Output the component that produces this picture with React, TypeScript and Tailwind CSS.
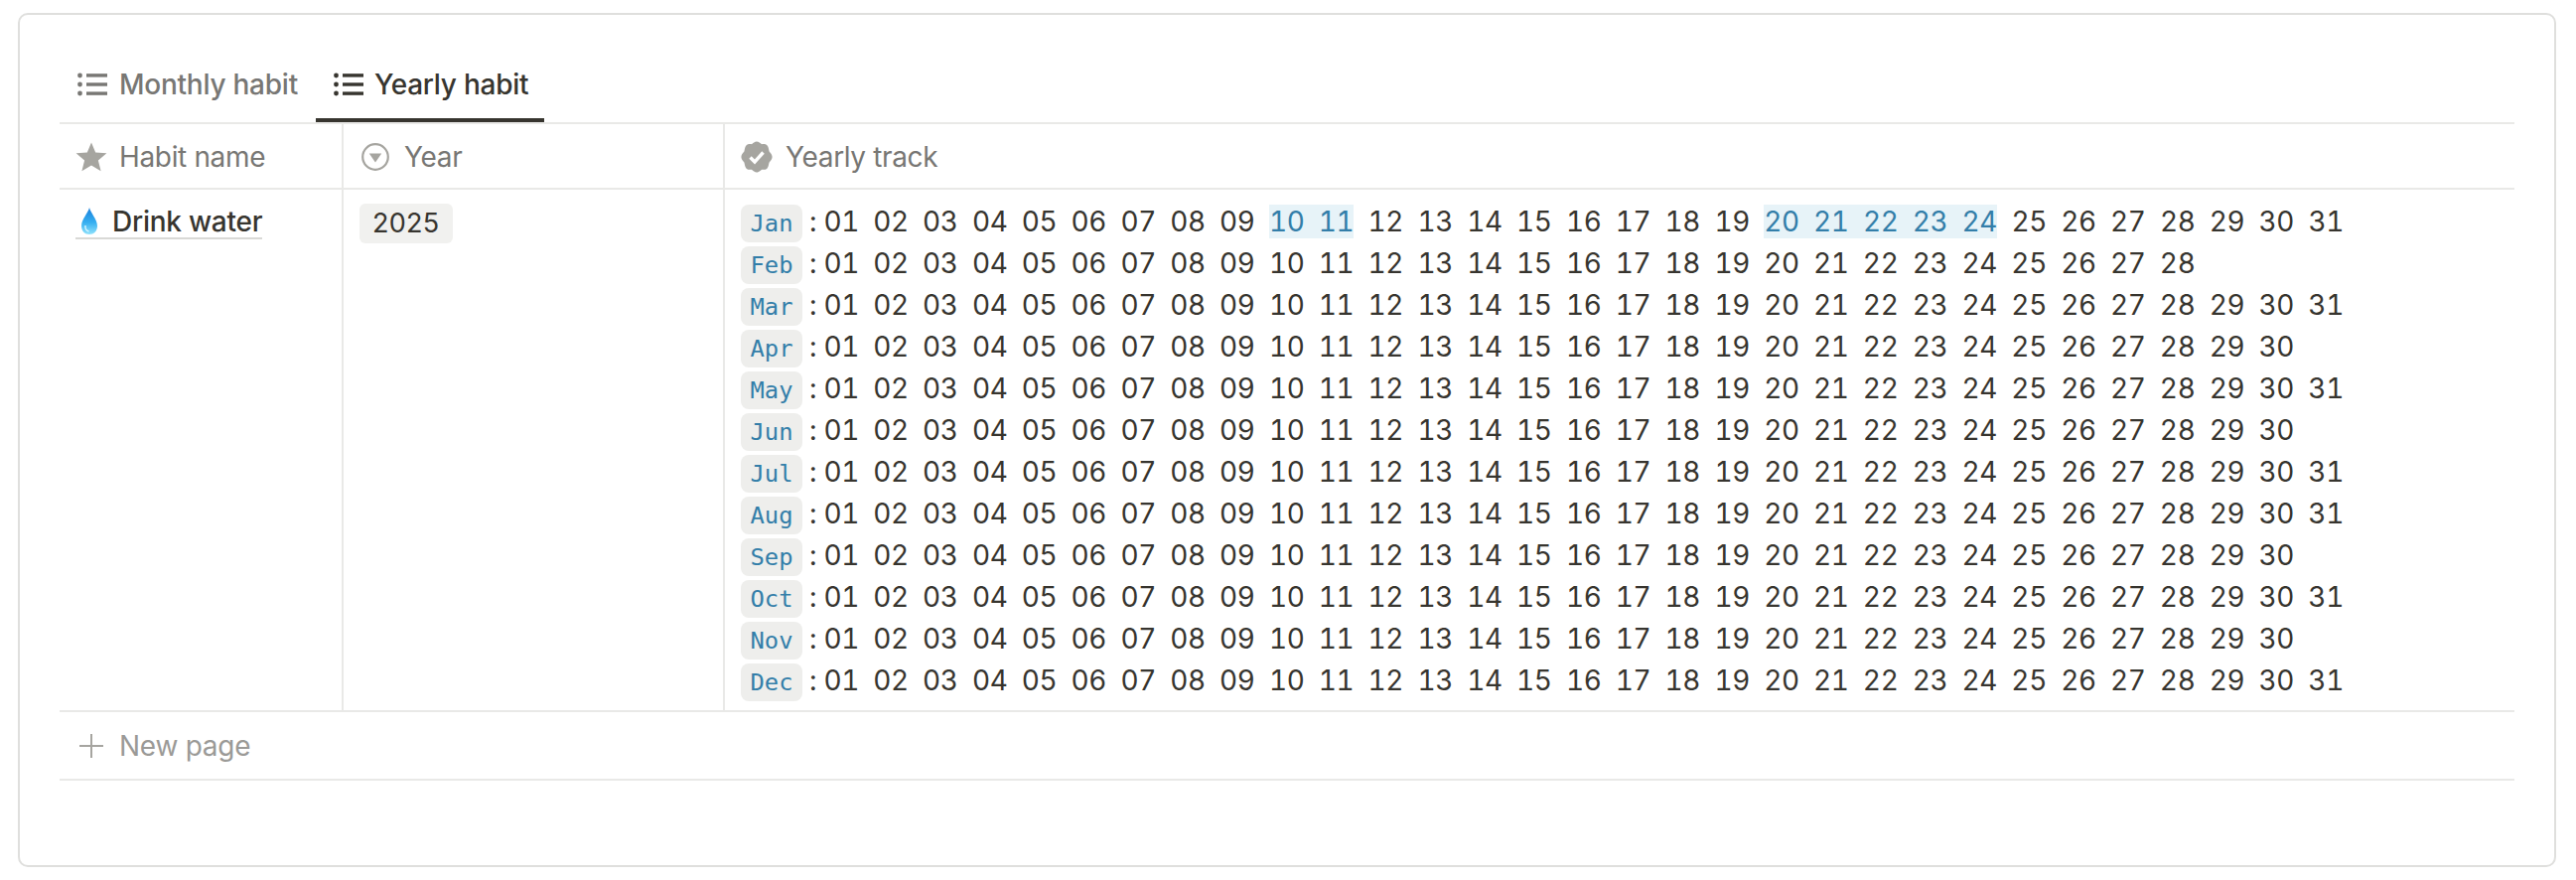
const months: [string, number][] = [
  ["Jan", 31],
  ["Feb", 28],
  ["Mar", 31],
  ["Apr", 30],
  ["May", 31],
  ["Jun", 30],
  ["Jul", 31],
  ["Aug", 31],
  ["Sep", 30],
  ["Oct", 31],
  ["Nov", 30],
  ["Dec", 31],
];

const pad = (n: number) => String(n).padStart(2, "0");

const range = (from: number, to: number) => {
  const out: string[] = [];
  for (let i = from; i <= to; i++) out.push(pad(i));
  return out.join("  ");
};

const ListIcon = () => (
  <svg width="30" height="24" viewBox="0 0 30 24" fill="currentColor">
    <circle cx="2.5" cy="3" r="2.4" />
    <circle cx="2.5" cy="12" r="2.4" />
    <circle cx="2.5" cy="21" r="2.4" />
    <rect x="9" y="1.2" width="21" height="3.4" />
    <rect x="9" y="10.3" width="21" height="3.4" />
    <rect x="9" y="19.4" width="21" height="3.4" />
  </svg>
);

const StarIcon = () => (
  <svg width="32" height="30" viewBox="0 0 32 30" fill="#a6a5a0">
    <path d="M16 0.5 L20.2 10.4 L31.4 11.3 L22.9 18.4 L25.6 29.2 L16 23.4 L6.4 29.2 L9.1 18.4 L0.6 11.3 L11.8 10.4 Z" />
  </svg>
);

const SelectIcon = () => (
  <svg width="28" height="28" viewBox="0 0 28 28">
    <circle cx="14" cy="14" r="12.8" fill="none" stroke="#a6a5a0" strokeWidth="2.2" />
    <path d="M7.8 10.5 H20.2 L14 19.5 Z" fill="#a6a5a0" />
  </svg>
);

const BadgeIcon = () => (
  <svg width="32" height="32" viewBox="0 0 32 32">
    <path
      fill="#a6a5a0"
      d="M16 0.5 C18 0.5 19.6 2 21 3.2 C23 3 25.4 3 26.6 4.6 C28 6 28 8.6 28.6 10.4 C30 11.8 31.6 13.8 31.6 16 C31.6 18.2 30 20 28.6 21.6 C28 23.4 28 26 26.6 27.4 C25.2 28.8 23 29 21 28.8 C19.6 30 18 31.6 16 31.6 C14 31.6 12.4 30 11 28.8 C9 29 6.8 28.8 5.4 27.4 C4 26 4 23.4 3.4 21.6 C2 20 0.4 18.2 0.4 16 C0.4 13.8 2 11.8 3.4 10.4 C4 8.6 4 6 5.4 4.6 C6.6 3 9 3 11 3.2 C12.4 2 14 0.5 16 0.5 Z"
    />
    <path d="M9.5 16.5 L14 21 L22.5 11.5" fill="none" stroke="#fff" strokeWidth="3.4" />
  </svg>
);

const PlusIcon = () => (
  <svg width="24" height="24" viewBox="0 0 24 24" stroke="#a6a5a0" strokeWidth="2" fill="none">
    <path d="M12 0 V24 M0 12 H24" />
  </svg>
);

const DropIcon = () => (
  <svg width="16" height="27" viewBox="0 0 16 27">
    <defs>
      <linearGradient id="drop" x1="0" y1="0" x2="0" y2="1">
        <stop offset="0" stopColor="#1a80dc" />
        <stop offset="0.55" stopColor="#35aef0" />
        <stop offset="1" stopColor="#8fe2fc" />
      </linearGradient>
    </defs>
    <path d="M8 0 C9 5 16 12 16 18.5 C16 23.5 12.5 27 8 27 C3.5 27 0 23.5 0 18.5 C0 12 7 5 8 0 Z" fill="url(#drop)" />
    <path d="M4 18 C3.5 21 5 23.5 7.5 24" fill="none" stroke="#d8f5ff" strokeWidth="1.5" />
  </svg>
);

const Mark = ({ children }: { children: string }) => (
  <span className="bg-[#e7f3f8] text-[#337ea9]">{children}</span>
);

const MonthRow = ({ name, days }: { name: string; days: number }) => (
  <div className="h-[42px] leading-[42px] whitespace-pre tabular-nums tracking-[-0.38px]">
    <code className="bg-[#eeeeec] text-[#337ea9] rounded-lg px-[9.5px] py-[5px] text-[23.8px] tracking-normal font-['DejaVu_Sans_Mono',monospace]">
      {name}
    </code>
    {" : "}
    {name === "Jan" ? (
      <>
        {range(1, 9)}
        {"  "}
        <Mark>{range(10, 11)}</Mark>
        {"  "}
        {range(12, 19)}
        {"  "}
        <Mark>{range(20, 24)}</Mark>
        {"  "}
        {range(25, days)}
      </>
    ) : (
      range(1, days)
    )}
  </div>
);

export default function App() {
  return (
    <div className="min-h-screen bg-white pt-[13px] pl-[18px] font-['Inter',sans-serif] text-[28px] text-[#37352f]">
      <div className="w-[2556px] h-[860px] border-2 border-[#dfdfdd] rounded-[10px] bg-white px-[40px] pt-[38px]">
        <div className="flex h-[70px] border-b-2 border-[#e9e9e7] box-content tracking-[-0.25px]">
          <div className="flex items-center gap-[12px] px-[18px] pb-[7px] text-[#787774] font-medium h-[70px]">
            <ListIcon />
            Monthly habit
          </div>
          <div className="flex items-center gap-[11px] pl-[18px] pr-[16px] pb-[3px] font-medium h-[70px] border-b-4 border-[#37352f]">
            <ListIcon />
            Yearly habit
          </div>
        </div>

        <div className="grid grid-cols-[286px_384px_1fr] h-[64px] border-b-2 border-[#e9e9e7] box-content text-[#787774] tracking-[-0.35px]">
          <div className="flex items-center gap-[12px] pl-[16px] pt-[2px] border-r-2 border-[#e9e9e7]">
            <StarIcon />
            Habit name
          </div>
          <div className="flex items-center gap-[15px] pl-[18px] pt-[2px] border-r-2 border-[#e9e9e7]">
            <SelectIcon />
            Year
          </div>
          <div className="flex items-center gap-[13px] pl-[16px] pt-[2px]">
            <BadgeIcon />
            Yearly track
          </div>
        </div>

        <div className="grid grid-cols-[286px_384px_1fr] border-b-2 border-[#e9e9e7]">
          <div className="pl-[16px] pt-[14px] border-r-2 border-[#e9e9e7]">
            <span className="inline-flex items-center gap-[15px] font-medium border-b-2 border-[#d9d9d6] h-[34px] pl-[6px] tracking-[-0.25px]">
              <DropIcon />
              Drink water
            </span>
          </div>
          <div className="pl-[16px] pt-[12px] border-r-2 border-[#e9e9e7]">
            <span className="inline-block h-[40px] leading-[40px] px-[13px] rounded-md bg-[#f1f1ef] text-[27px] tracking-[0.3px]">
              2025
            </span>
          </div>
          <div className="pl-[16px] pt-[11px] pb-[9px]">
            {months.map(([name, days]) => (
              <MonthRow key={name} name={name} days={days} />
            ))}
          </div>
        </div>

        <div className="flex items-center gap-[16px] h-[66px] pl-[20px] pt-[1px] border-b-2 border-[#e9e9e7] box-content text-[#9b9a97] tracking-[-0.25px]">
          <PlusIcon />
          New page
        </div>
      </div>
    </div>
  );
}
